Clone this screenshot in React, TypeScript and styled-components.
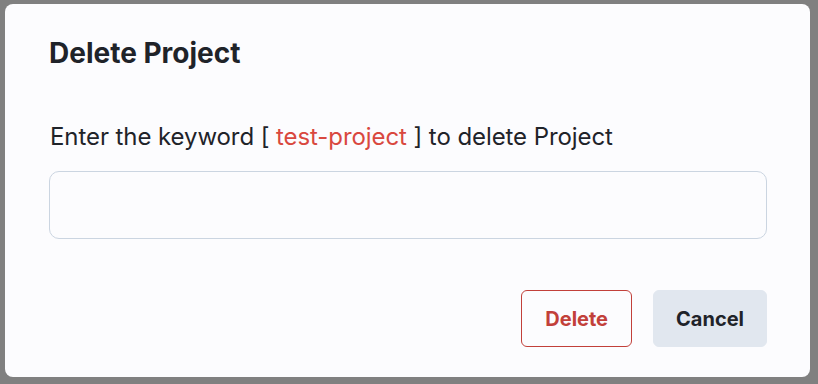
import React from "react";
import styled, { createGlobalStyle } from "styled-components";

const GlobalStyle = createGlobalStyle`
  html, body {
    margin: 0;
    padding: 0;
    background: #808080;
    font-family: Inter, "Noto Sans", sans-serif;
  }
`;

const Backdrop = styled.div`
  width: 818px;
  height: 384px;
  box-sizing: border-box;
  padding: 4px 8px 7px 5px;
`;

const Dialog = styled.div`
  height: 100%;
  box-sizing: border-box;
  background: #fcfcfe;
  border-radius: 8px;
  padding: 32px 43px 0 44px;
  display: flex;
  flex-direction: column;
`;

const Title = styled.h2`
  margin: 0;
  font-size: 28px;
  line-height: 34px;
  font-weight: 700;
  color: #1f2329;
`;

const Prompt = styled.p`
  margin: 51px 0 0 1px;
  font-size: 24px;
  line-height: 32px;
  letter-spacing: -0.08px;
  color: #1f2329;
`;

const Keyword = styled.span`
  color: #d9483f;
`;

const KeywordInput = styled.input`
  margin-top: 18px;
  height: 68px;
  box-sizing: border-box;
  border: 1px solid #cbd5e1;
  border-radius: 10px;
  background: transparent;
  font: inherit;
  font-size: 20px;
  padding: 0 16px;
  outline: none;
`;

const Actions = styled.div`
  margin-top: 51px;
  display: flex;
  justify-content: flex-end;
  gap: 21px;
`;

const Button = styled.button<{ $variant: "danger" | "neutral" }>`
  height: 57px;
  box-sizing: border-box;
  padding: 0 ${(p) => (p.$variant === "danger" ? "23px" : "22px")};
  border-radius: 6px;
  font-family: Inter, "Noto Sans", sans-serif;
  font-size: 20px;
  font-weight: 700;
  cursor: pointer;
  border: 1px solid
    ${(p) => (p.$variant === "danger" ? "#c2403a" : "#e1e7ef")};
  background: ${(p) => (p.$variant === "danger" ? "transparent" : "#e1e7ef")};
  color: ${(p) => (p.$variant === "danger" ? "#c2403a" : "#1f2329")};
`;

export default function App() {
  return (
    <>
      <GlobalStyle />
      <Backdrop>
        <Dialog>
          <Title>Delete Project</Title>
          <Prompt>
            Enter the keyword [ <Keyword>test-project</Keyword> ] to delete
            Project
          </Prompt>
          <KeywordInput type="text" />
          <Actions>
            <Button $variant="danger">Delete</Button>
            <Button $variant="neutral">Cancel</Button>
          </Actions>
        </Dialog>
      </Backdrop>
    </>
  );
}
